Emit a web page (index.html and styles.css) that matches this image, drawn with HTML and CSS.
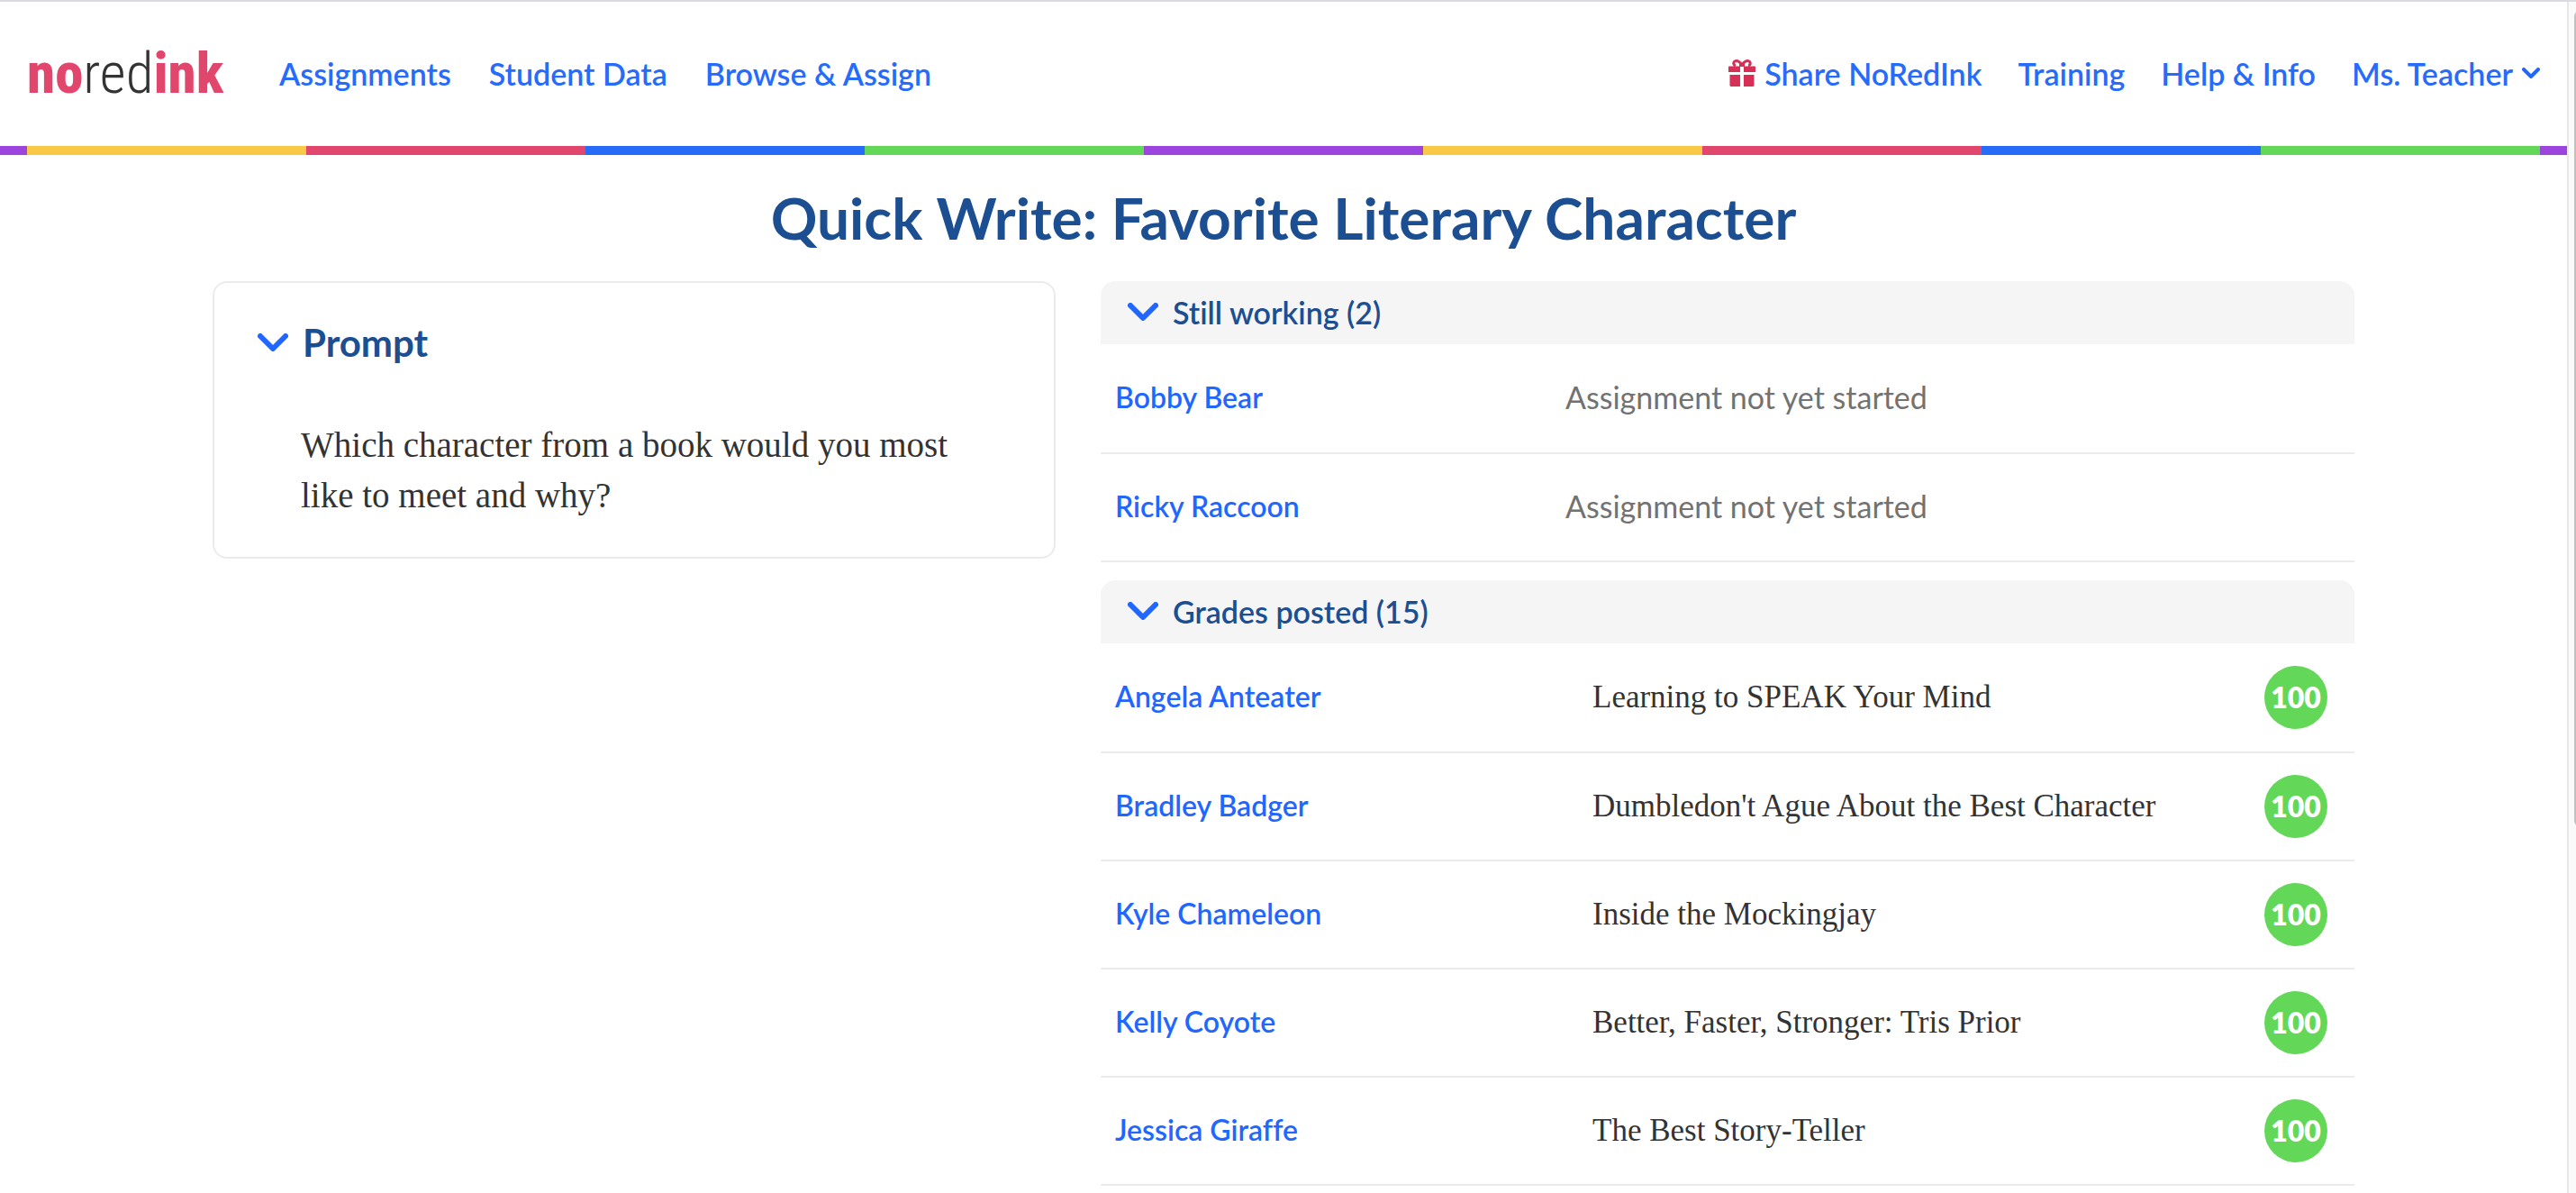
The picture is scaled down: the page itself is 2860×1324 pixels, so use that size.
FILE: index.html
```html
<!DOCTYPE html>
<html lang="en">
<head>
  <meta charset="UTF-8">
  <meta name="viewport" content="width=device-width, initial-scale=1.0">
  <title>Quick Write: Favorite Literary Character</title>
  <link rel="stylesheet" href="styles.css">
</head>
<body>
  <div class="page">
    <header class="header">
      <a href="#" class="logo"><b>no</b>red<b>ink</b></a>
      <nav class="nav">
        <a href="#">Assignments</a>
        <a href="#">Student Data</a>
        <a href="#">Browse &amp; Assign</a>
      </nav>
      <nav class="nav nav-right">
        <a href="#" class="share">
          <svg class="gift" viewBox="0 0 30 30" aria-hidden="true">
            <path d="M0 8.500Q0 7.500 1 7.500H13V14H0ZM17 7.500H29Q30 7.500 30 8.500V14H17ZM1.500 17H13V30H3Q1.500 30 1.500 28.500ZM17 17H28.500V28.500Q28.500 30 27 30H17Z"/>
            <path d="M12 5H18V8H12Z"/>
            <path class="bow" d="M15 6C12 2 9 1 7 2C5 3.500 5.500 6.500 8 7M15 6C18 2 21 1 23 2C25 3.500 24.500 6.500 22 7"/>
          </svg>
          Share NoRedInk
        </a>
        <a href="#">Training</a>
        <a href="#">Help &amp; Info</a>
        <button type="button" class="account">
          Ms. Teacher
          <svg viewBox="0 0 20 12" aria-hidden="true"><path d="M2 2L10 10L18 2"/></svg>
        </button>
      </nav>
    </header>

    <div class="stripes">
      <span class="yellow"></span>
      <span class="pink"></span>
      <span class="blue"></span>
      <span class="green"></span>
      <span class="purple"></span>
      <span class="yellow"></span>
      <span class="pink"></span>
      <span class="blue"></span>
      <span class="green"></span>
    </div>

    <main class="main">
      <h1>Quick Write: Favorite Literary Character</h1>

      <div class="columns">
        <section class="prompt">
          <h2>
            <button type="button" class="toggle">
              <svg class="chevron" viewBox="0 0 34 20" aria-hidden="true"><path d="M3 3L17 17L31 3"/></svg>
              Prompt
            </button>
          </h2>
          <p>Which character from a book would you most like to meet and why?</p>
        </section>

        <div class="groups">
          <section class="group">
            <h2>
              <button type="button" class="toggle">
                <svg class="chevron" viewBox="0 0 34 20" aria-hidden="true"><path d="M3 3L17 17L31 3"/></svg>
                Still working (2)
              </button>
            </h2>
            <table class="students">
              <tr>
                <td class="name"><a href="#">Bobby Bear</a></td>
                <td class="status">Assignment not yet started</td>
              </tr>
              <tr>
                <td class="name"><a href="#">Ricky Raccoon</a></td>
                <td class="status">Assignment not yet started</td>
              </tr>
            </table>
          </section>

          <section class="group">
            <h2>
              <button type="button" class="toggle">
                <svg class="chevron" viewBox="0 0 34 20" aria-hidden="true"><path d="M3 3L17 17L31 3"/></svg>
                Grades posted (15)
              </button>
            </h2>
            <table class="students">
              <tr>
                <td class="name"><a href="#">Angela Anteater</a></td>
                <td class="work">Learning to SPEAK Your Mind</td>
                <td class="grade"><span>100</span></td>
              </tr>
              <tr>
                <td class="name"><a href="#">Bradley Badger</a></td>
                <td class="work">Dumbledon't Ague About the Best Character</td>
                <td class="grade"><span>100</span></td>
              </tr>
              <tr>
                <td class="name"><a href="#">Kyle Chameleon</a></td>
                <td class="work">Inside the Mockingjay</td>
                <td class="grade"><span>100</span></td>
              </tr>
              <tr>
                <td class="name"><a href="#">Kelly Coyote</a></td>
                <td class="work">Better, Faster, Stronger: Tris Prior</td>
                <td class="grade"><span>100</span></td>
              </tr>
              <tr>
                <td class="name"><a href="#">Jessica Giraffe</a></td>
                <td class="work">The Best Story-Teller</td>
                <td class="grade"><span>100</span></td>
              </tr>
            </table>
          </section>
        </div>
      </div>
    </main>
  </div>
  <div class="scrollbar"><div class="thumb"></div></div>
</body>
</html>
```
FILE: styles.css
```css
* {
  margin: 0;
  padding: 0;
  box-sizing: border-box;
}

body {
  display: flex;
  height: 100vh;
  overflow: hidden;
  border-top: 2px solid #dcdbe1;
  background: #fff;
  color: #333;
  font-family: Lato, sans-serif;
  font-size: 34px;
  font-variant-ligatures: none;
}

a {
  color: #2167ff;
  text-decoration: none;
}

button {
  display: flex;
  align-items: center;
  border: none;
  background: none;
  color: inherit;
  font: inherit;
  cursor: pointer;
}

svg {
  flex: none;
}

.page {
  flex: 1;
  min-width: 0;
}

/* Header */
.header {
  display: flex;
  align-items: center;
  height: 160px;
  padding: 0 30px 2px;
}

.logo {
  width: 216px;
  color: #333;
  font-family: "Roboto Condensed", Roboto, sans-serif;
  font-size: 63px;
  font-weight: 300;
  white-space: nowrap;
}

.logo b {
  color: #e1466d;
  font-weight: 800;
}

.nav {
  display: flex;
  align-items: center;
  gap: 42px;
  margin-left: 64px;
  color: #276bfb;
  font-weight: 600;
}

.nav a {
  color: inherit;
}

.nav-right {
  gap: 40px;
  margin-left: auto;
}

.share {
  display: flex;
  align-items: center;
  gap: 10px;
}

.gift {
  width: 30px;
  height: 30px;
  fill: #d72f55;
}

.bow {
  fill: none;
  stroke: #d72f55;
  stroke-width: 3;
}

.account {
  gap: 10px;
}

.account svg {
  width: 20px;
  height: 12px;
}

.account path,
.chevron path {
  fill: none;
  stroke: #2167ff;
  stroke-width: 4;
  stroke-linecap: round;
  stroke-linejoin: round;
}

/* Rainbow line under the header */
.stripes {
  display: flex;
  height: 10px;
  padding: 0 30px;
  background: #9b44de;
}

.stripes span {
  flex: 1;
}

.yellow { background: #f9c846; }
.pink { background: #e1466d; }
.blue { background: #276cf8; }
.green { background: #63d757; }
.purple { background: #9b44de; }

/* Content */
.main {
  padding: 0 236px;
}

h1 {
  padding: 32px 0;
  color: #1c4e92;
  font-size: 64px;
  font-weight: 700;
  line-height: 76px;
  text-align: center;
}

.columns {
  display: grid;
  grid-template-columns: 936fr 1392fr;
  align-items: start;
  gap: 50px;
}

.toggle {
  gap: 16px;
  color: #1c4e92;
}

.chevron {
  width: 34px;
  height: 20px;
}

.chevron path {
  stroke-width: 6;
}

.prompt {
  padding: 38px 48px 40px;
  border: 2px solid #ebebeb;
  border-radius: 16px;
}

.prompt h2 {
  font-size: 42px;
  font-weight: 700;
  line-height: 56px;
}

.prompt p {
  padding: 58px 48px 0;
  font-family: Georgia, "Liberation Serif", serif;
  font-size: 39px;
  line-height: 56px;
}

.groups {
  display: flex;
  flex-direction: column;
  gap: 20px;
}

.group h2 {
  display: flex;
  height: 70px;
  padding: 0 30px 2px;
  border-radius: 16px 16px 0 0;
  background: #f5f5f5;
  font-size: 34px;
  font-weight: 600;
}

.students {
  width: 100%;
  border-collapse: separate;
  border-spacing: 0;
  table-layout: fixed;
}

.students td {
  height: 120px;
  border-bottom: 2px solid #ebebeb;
}

.students tr:first-child td {
  height: 122px;
}

.students .name {
  width: 516px;
  padding: 0 0 4px 16px;
  font-size: 32px;
  font-weight: 600;
}

.students .status {
  padding-bottom: 4px;
  color: #727272;
}

.work {
  padding-left: 30px;
  font-family: Georgia, "Liberation Serif", serif;
  font-size: 35px;
}

.grade {
  width: 100px;
}

.grade span {
  display: block;
  width: 70px;
  border-radius: 50%;
  background: #63d757;
  color: #fff;
  font-size: 32px;
  font-weight: 800;
  line-height: 70px;
  text-align: center;
}

/* Scrollbar track */
.scrollbar {
  width: 10px;
  padding: 10px 0 0 6px;
  border-left: 2px solid #e8e8e8;
  background: #fafafa;
  overflow: hidden;
}

.thumb {
  width: 12px;
  height: 69%;
  border-radius: 6px;
  background: #c1c1c1;
}
```
